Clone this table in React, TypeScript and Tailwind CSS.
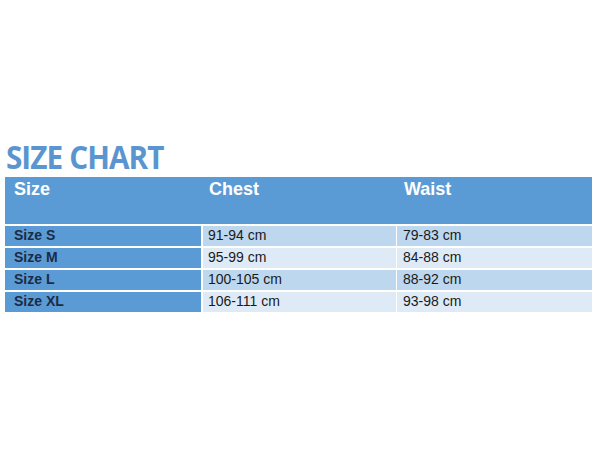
import React from 'react';

const rows = [
  { size: 'Size S', chest: '91-94 cm', waist: '79-83 cm' },
  { size: 'Size M', chest: '95-99 cm', waist: '84-88 cm' },
  { size: 'Size L', chest: '100-105 cm', waist: '88-92 cm' },
  { size: 'Size XL', chest: '106-111 cm', waist: '93-98 cm' },
];

const App: React.FC = () => {
  return (
    <div className="w-[600px] h-[450px] bg-white pt-[139px] px-[5px]">
      <h1
        className="text-[33px] leading-[36px] font-bold text-[#5b95d0] pl-[1px] tracking-[-1px] scale-x-[0.9] origin-left"
        style={{ fontFamily: '"Open Sans", sans-serif' }}
      >
        SIZE CHART
      </h1>

      <div className="w-[587px] mt-[2px]" style={{ fontFamily: '"Liberation Sans", Arial, sans-serif' }}>
        {/* header */}
        <div className="grid grid-cols-[198px_195px_194px] h-[47px] bg-[#5b9bd5] text-white font-bold text-[18px] leading-[22px]">
          <div className="pl-[9px] pt-[1px]">Size</div>
          <div className="pl-[6px] pt-[1px]">Chest</div>
          <div className="pl-[6px] pt-[1px]">Waist</div>
        </div>

        {rows.map((r, i) => (
          <div
            key={r.size}
            className="grid grid-cols-[196px_194px_195px] gap-x-[1px] border-t-2 border-white h-[22px] text-[14px] leading-[19px]"
          >
            <div className="bg-[#5b9bd5] pl-[9px] font-bold text-[#1c2b45]">{r.size}</div>
            <div className={`${i % 2 === 0 ? 'bg-[#bdd7ee]' : 'bg-[#deebf7]'} ml-[1px] pl-[5px] text-[#1a1a1a]`}>{r.chest}</div>
            <div className={`${i % 2 === 0 ? 'bg-[#bdd7ee]' : 'bg-[#deebf7]'} pl-[6px] text-[#1a1a1a]`}>{r.waist}</div>
          </div>
        ))}
      </div>
    </div>
  );
};

export default App;
